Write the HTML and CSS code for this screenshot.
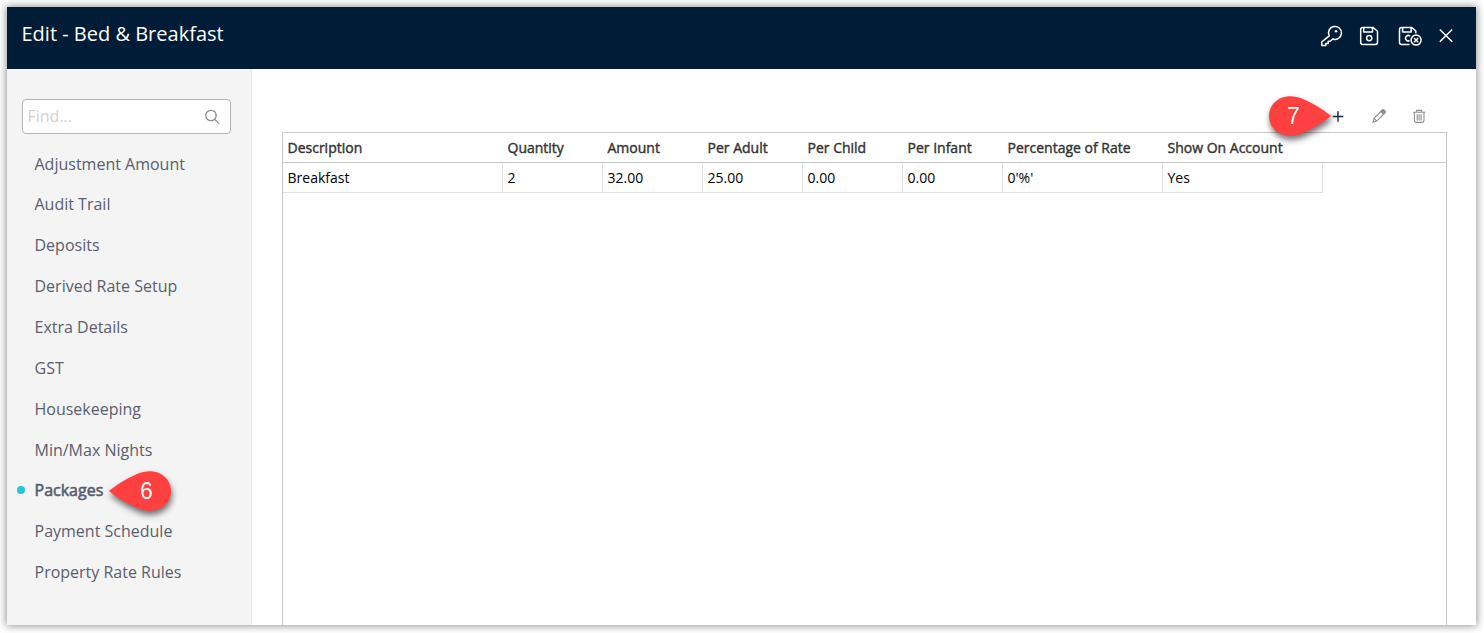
FILE: index.html
```html
<!DOCTYPE html>
<html lang="en">
<head>
<meta charset="utf-8">
<title>Edit - Bed &amp; Breakfast</title>
<link rel="stylesheet" href="styles.css">
</head>
<body>
<div class="dialog">
  <header class="titlebar">
    <h1 class="title">Edit - Bed &amp; Breakfast</h1>
    <div class="actions">
      <svg class="icon" width="24" height="24" viewBox="0 0 24 24"><path d="M10.2 11.9 2.8 17.9V21.5H6.8V19.5H9.2V17.2H11.4L13.7 15A6.5 6.5 0 1 0 10.2 11.9Z"/><circle class="fill" cx="17" cy="7.3" r="1.2"/></svg>
      <svg class="icon save" width="24" height="24" viewBox="0 0 24 24"><path d="M5.7 3.5H16.2L20.5 7.2V18.2Q20.5 20.4 18.3 20.4H5.7Q3.7 20.4 3.7 18.4V5.5Q3.7 3.5 5.7 3.5ZM6.7 3.7V8H15.5V3.7"/><circle cx="12.2" cy="14.1" r="2.6"/></svg>
      <svg class="icon" width="26" height="24" viewBox="0 0 26 24"><path d="M12.5 20.4H4.7Q2.5 20.4 2.5 18.4V5.5Q2.5 3.5 4.5 3.5H14.8L18.8 7V9.2M5.6 3.7V8H14.2V3.7M13 12.1A2.7 2.7 0 1 0 12.6 16.5"/><circle cx="19.1" cy="16.1" r="5"/><path d="M17 14 21.2 18.2M21.2 14 17 18.2"/></svg>
      <svg class="icon" width="24" height="24" viewBox="0 0 24 24"><path d="M5.8 5.5 18.2 17.7M18.2 5.5 5.8 17.7"/></svg>
    </div>
  </header>
  <div class="content">
    <aside class="sidebar">
      <div class="search"><span>Find...</span>
        <svg width="16" height="16" viewBox="0 0 16 16"><circle cx="7" cy="6.5" r="5.2"/><path d="M10.8 10.4 15 14.6"/></svg>
      </div>
      <nav class="menu">
        <a>Adjustment Amount</a>
        <a>Audit Trail</a>
        <a>Deposits</a>
        <a>Derived Rate Setup</a>
        <a>Extra Details</a>
        <a>GST</a>
        <a>Housekeeping</a>
        <a>Min/Max Nights</a>
        <a class="active">Packages</a>
        <a>Payment Schedule</a>
        <a>Property Rate Rules</a>
      </nav>
    </aside>
    <main class="main">
      <div class="toolbar">
        <svg class="add" width="16" height="16" viewBox="0 0 16 16"><path d="M8 3.2V13.8M2.7 8.5H13.3"/></svg>
        <svg class="tool" width="16" height="16" viewBox="0 0 16 16"><path d="M2 14.2 3 10.4 10.7 2.8 13.3 5.4 5.7 13.1ZM3 10.4 5.7 13.1"/><path class="solid" d="M9.8 3.4 11.4 1.9Q12.2 1.2 13.2 2.1L14 2.9Q14.8 3.8 14.1 4.6L12.6 6.2Z"/></svg>
        <svg class="tool" width="16" height="16" viewBox="0 0 16 16"><path d="M2.2 4.2H14.2M5.7 4V2.4H10.7V4M3.4 4.2V12.6Q3.4 14.4 5.2 14.4H11.2Q13 14.4 13 12.6V4.2M6.2 6.2V12.4M8.2 6.2V12.4M10.2 6.2V12.4"/></svg>
      </div>
      <div class="grid">
        <div class="row head">
          <div>Description</div><div>Quantity</div><div>Amount</div><div>Per Adult</div><div>Per Child</div><div>Per Infant</div><div>Percentage of Rate</div><div>Show On Account</div>
        </div>
        <div class="row data">
          <div>Breakfast</div><div>2</div><div>32.00</div><div>25.00</div><div>0.00</div><div>0.00</div><div>0'%'</div><div>Yes</div>
        </div>
      </div>
    </main>
  </div>
</div>
<div class="pin pin-packages">
  <svg width="64" height="42" viewBox="0 0 64 42"><path d="M0 21Q12 11 28 4C46-4 62 6 62 21S46 46 28 38Q12 31 0 21Z"/></svg><span>6</span>
</div>
<div class="pin pin-add">
  <svg width="64" height="42" viewBox="0 0 64 42"><path d="M62 21Q50 11 34 4C16-4 0 6 0 21S16 46 34 38Q50 31 62 21Z"/></svg><span>7</span>
</div>
</body>
</html>
```
FILE: styles.css
```css
* { box-sizing: border-box; }
body {
  margin: 0;
  padding: 7px 8px 8px 7px;
  height: 633px;
  overflow: hidden;
  background: #fff;
  font-family: "Open Sans", "Noto Sans", sans-serif;
}
.dialog {
  display: flex;
  flex-direction: column;
  height: 618px;
  background: #fff;
  box-shadow: 0 0 8px 1px rgba(0, 0, 0, .42);
}
.titlebar {
  display: flex;
  justify-content: space-between;
  height: 62px;
  padding: 0 18px 0 14.5px;
  background: #001c36;
  color: #fff;
}
.title { margin: 0; font-size: 20px; font-weight: 400; line-height: 54px; }
.actions { display: flex; align-items: center; gap: 11px; height: 57px; }
.icon { fill: none; stroke: #fff; stroke-width: 1.5; stroke-linejoin: round; }
.icon .fill { fill: #fff; stroke: none; }
.save { margin: 0 5px 0 3px; }
.content { display: flex; flex: 1; min-height: 0; }
.sidebar {
  width: 245px;
  padding: 30px 20px 0 15px;
  background: #f4f4f4;
  border-right: 1px solid #e9e9e9;
}
.search {
  display: flex;
  align-items: center;
  justify-content: space-between;
  height: 35px;
  padding: 0 10px 0 4.5px;
  background: #fff;
  border: 1px solid #b4b4b4;
  border-radius: 4px;
  color: #d2d2d2;
  font-size: 16px;
  line-height: 31px;
}
.search svg { fill: none; stroke: #8c8c8c; stroke-width: 1.3; }
.menu { display: flex; flex-direction: column; padding: 9.63px 0 0 12.5px; }
.menu a {
  position: relative;
  height: 40.85px;
  line-height: 41px;
  font-size: 16px;
  color: #5b5e6d;
  white-space: nowrap;
}
.menu .active { -webkit-text-stroke: .6px #5b5e6d; }
.menu .active::before {
  content: "";
  position: absolute;
  left: -18px;
  top: 16px;
  width: 8px;
  height: 8px;
  border-radius: 50%;
  background: #20cbd6;
}
.main { display: flex; flex: 1; flex-direction: column; padding: 39px 29px 0 30px; }
.toolbar {
  display: flex;
  justify-content: flex-end;
  gap: 24px;
  height: 24px;
  padding-right: 20px;
}
.toolbar svg { fill: none; }
.add { margin-right: 1px; stroke: #16283b; stroke-width: 1.4; }
.tool { stroke: #8e8e8e; stroke-width: 1.1; }
.tool .solid { fill: #8e8e8e; }
.grid { flex: 1; border: 1px solid #c8c8c8; border-bottom: 0; }
.row {
  display: grid;
  grid-template-columns: 220px repeat(5, 100px) 160px 160px;
  grid-template-rows: 100%;
  height: 30px;
  font-size: 14px;
  line-height: 30px;
  white-space: nowrap;
}
.row div { padding-left: 4.5px; }
.head { border-bottom: 1px solid #c8c8c8; color: #333; -webkit-text-stroke: .4px #333; }
.data { color: #000; }
.data div { border-right: 1px solid #e0e0e0; border-bottom: 1px solid #e0e0e0; }
.pin {
  position: absolute;
  width: 64px;
  height: 42px;
  color: #fff;
  font: 23px/42px "Liberation Sans", Arial, sans-serif;
  filter: drop-shadow(1px 4px 3px rgba(0, 0, 0, .55));
}
.pin svg { position: absolute; inset: 0; fill: #ff4040; overflow: visible; }
.pin span { position: absolute; top: 0; }
.pin-packages { left: 109px; top: 470px; }
.pin-packages span { left: 31px; }
.pin-add { left: 1269px; top: 95px; }
.pin-add span { left: 18px; }
```
